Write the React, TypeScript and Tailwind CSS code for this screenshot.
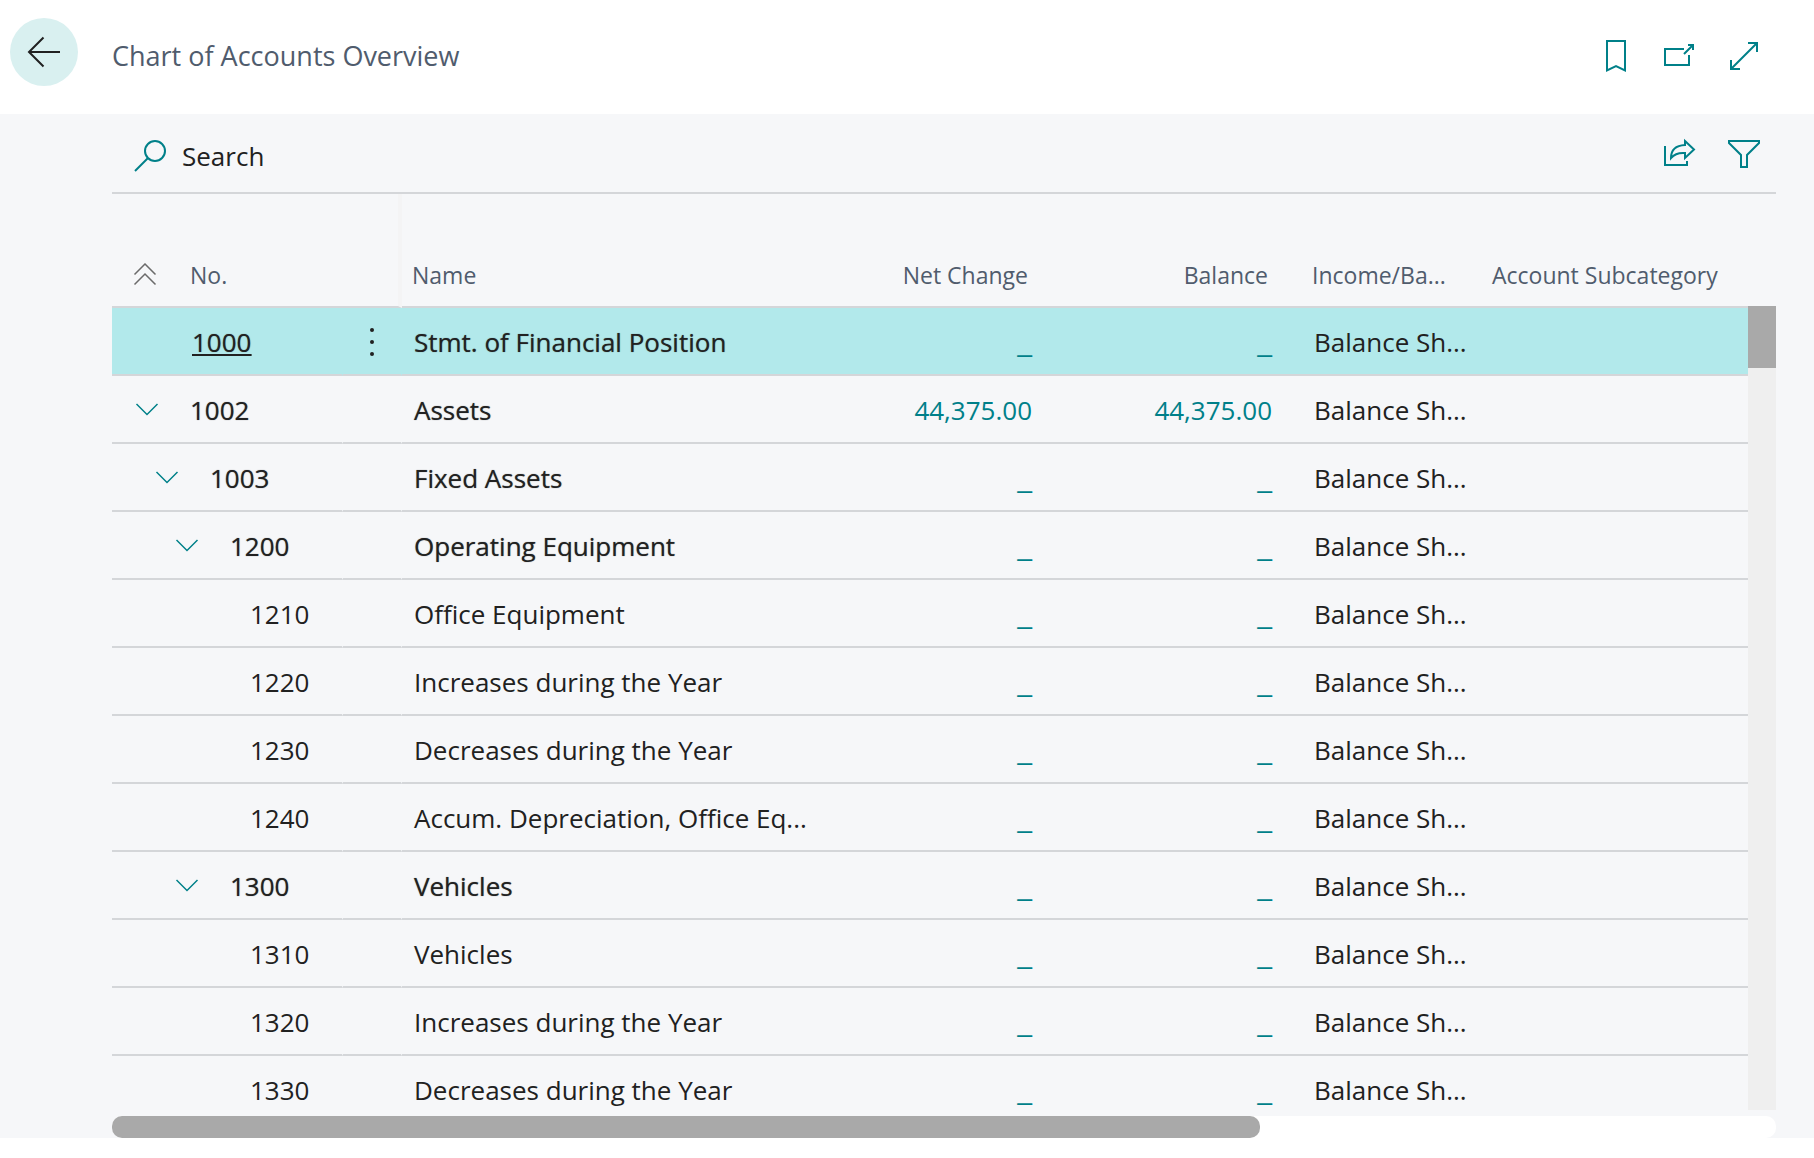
import React, { useState } from 'react';

interface Account {
  no: string;
  name: string;
  level: number;
  heading?: boolean;
  expandable?: boolean;
  netChange?: string;
  balance?: string;
}

const accounts: Account[] = [
  { no: '1000', name: 'Stmt. of Financial Position', level: 0, heading: true },
  { no: '1002', name: 'Assets', level: 0, heading: true, expandable: true, netChange: '44,375.00', balance: '44,375.00' },
  { no: '1003', name: 'Fixed Assets', level: 1, heading: true, expandable: true },
  { no: '1200', name: 'Operating Equipment', level: 2, heading: true, expandable: true },
  { no: '1210', name: 'Office Equipment', level: 3 },
  { no: '1220', name: 'Increases during the Year', level: 3 },
  { no: '1230', name: 'Decreases during the Year', level: 3 },
  { no: '1240', name: 'Accum. Depreciation, Office Eq...', level: 3 },
  { no: '1300', name: 'Vehicles', level: 2, heading: true, expandable: true },
  { no: '1310', name: 'Vehicles', level: 3 },
  { no: '1320', name: 'Increases during the Year', level: 3 },
  { no: '1330', name: 'Decreases during the Year', level: 3 }
];

const indent = ['pl-0', 'pl-5', 'pl-10', 'pl-15'];

interface IconProps {
  size?: string;
  children: React.ReactNode;
}

const Icon: React.FC<IconProps> = ({ size = '36', children }) => (
  <svg width={size} height={size} viewBox={`0 0 ${size} ${size}`} fill="none" stroke="currentColor" strokeWidth="2" className="block shrink-0" aria-hidden="true">
    {children}
  </svg>
);

const PageHeader: React.FC = () => (
  <header className="flex h-[114px] items-start bg-white pl-[10px] pr-[52px]">
    <button aria-label="Back" className="mt-[18px] flex size-[68px] shrink-0 items-center justify-center rounded-full bg-[#d9f0f0] text-[#212121]">
      <Icon>
        <path d="M34 18H3M17.500 3.500L3 18L17.500 32.500" />
      </Icon>
    </button>
    <h1 className="ml-[34px] mt-9 flex-1 text-[27px] leading-10 text-[#505c6d]">Chart of Accounts Overview</h1>
    <div className="mt-[38px] flex gap-7 text-[#008089]">
      <button aria-label="Bookmark">
        <Icon>
          <path d="M9 3H27V32.500L18 28L9 32.500Z" />
        </Icon>
      </button>
      <button aria-label="Open in new window">
        <Icon>
          <path d="M22 11H3V27H27V17M22 16L31 7M26 7H31V12" />
        </Icon>
      </button>
      <button aria-label="Expand">
        <Icon>
          <path d="M5 31L31 5M22 5H31V14M5 22V31H14" />
        </Icon>
      </button>
    </div>
  </header>
);

const Toolbar: React.FC = () => (
  <div className="flex h-20 items-start justify-between border-b-2 border-[#d4d6d9] pr-[14px]">
    <button className="mt-[22px] flex items-center gap-[14px] pl-5 text-[26px] leading-10 text-[#212121]">
      <span className="text-[#008089]">
        <Icon>
          <path d="M16 20L3 33" />
          <circle cx="23" cy="13" r="10" />
        </Icon>
      </span>
      Search
    </button>
    <div className="mt-[22px] flex gap-7 text-[#008089]">
      <button aria-label="Share">
        <Icon>
          <path d="M3 10V29H25V25M23 5L32 13.500L23 22V17C17 16.500 12 18.500 9 22C9 14 14 9.500 23 9Z" />
        </Icon>
      </button>
      <button aria-label="Filter">
        <Icon>
          <path d="M3 5H33V7L21 19V31H15V19L3 7Z" />
        </Icon>
      </button>
    </div>
  </div>
);

interface AmountProps {
  label: string;
  value?: string;
}

const Amount: React.FC<AmountProps> = ({ label, value }) => (
  <a href="#entries" aria-label={label} className={`pr-3 text-[#008089] ${value ? '' : "font-['Liberation_Sans',sans-serif]"}`}>
    {value ?? '_'}
  </a>
);

interface AccountRowProps {
  account: Account;
  selected: boolean;
  onSelect: () => void;
}

const AccountRow: React.FC<AccountRowProps> = ({ account, selected, onSelect }) => {
  const weight = account.heading ? '[text-shadow:0_0_1px_#21212199]' : '';
  const line = 'border-b-2 border-b-[#d4d6d9] p-0 pt-0.5';

  return (
    <tr onClick={onSelect} className={`h-[68px] ${selected ? 'bg-[#b2e9eb]' : ''}`}>
      <td className={`${line} border-r border-r-transparent`}>
        <div className={`flex items-center ${indent[account.level]}`}>
          <span className={`flex shrink-0 pl-[23px] ${selected ? 'w-20' : 'w-[78px]'}`}>
            {account.expandable && (
              <button aria-label={`Collapse ${account.no}`} className="text-[#008089]">
                <Icon size="24">
                  <path d="M1.500 6L12 16.500L22.500 6" strokeWidth="1.500" />
                </Icon>
              </button>
            )}
          </span>
          <a href={`#${account.no}`} className={`${weight} ${selected ? 'underline decoration-2 underline-offset-2' : ''}`}>{account.no}</a>
        </div>
      </td>
      <td className={`${line} border-r border-r-transparent`}>
        {selected && (
          <button aria-label="More options" className="ml-[11px] block">
            <Icon>
              <g fill="currentColor" stroke="none">
                <circle cx="18" cy="6" r="2" />
                <circle cx="18" cy="18" r="2" />
                <circle cx="18" cy="30" r="2" />
              </g>
            </Icon>
          </button>
        )}
      </td>
      <td className={`${line} ${weight}`}>
        <div className="truncate px-3">{account.name}</div>
      </td>
      <td className={`${line} text-right`}>
        <Amount label={`Net change ${account.no}`} value={account.netChange} />
      </td>
      <td className={`${line} text-right`}>
        <Amount label={`Balance ${account.no}`} value={account.balance} />
      </td>
      <td className={line}>
        <div className="truncate pl-[30px]">Balance Sh...</div>
      </td>
      <td className={line}></td>
    </tr>
  );
};

const App: React.FC = () => {
  const [selectedNo, setSelectedNo] = useState('1000');

  return (
    <div className="min-h-screen bg-white font-['Open_Sans',sans-serif]">
      <PageHeader />
      <main className="bg-[#f6f7f9] pl-28 pr-[38px]">
        <Toolbar />
        <div className="flex h-[922px] overflow-hidden">
          <div className="min-w-0 flex-1">
            <table className="w-full table-fixed border-separate border-spacing-0 text-[26px] leading-10 text-[#212121]">
              <colgroup>
                <col className="w-[231px]" />
                <col className="w-[59px]" />
                <col />
                <col className="w-[212px]" />
                <col className="w-60" />
                <col className="w-[198px]" />
                <col className="w-[266px]" />
              </colgroup>
              <thead>
                <tr className="h-[114px] align-bottom text-left text-[23px] leading-8 text-[#505c6d]">
                  <th className="border-b-2 border-[#d4d6d9] p-0 pb-[15px] font-normal">
                    <div className="flex items-center">
                      <span className="flex w-[78px] pl-[21px] text-[#6b6b6b]">
                        <button aria-label="Collapse all">
                          <Icon size="24">
                            <path d="M1.500 11.500L12 1L22.500 11.500M1.500 21.500L12 11L22.500 21.500" strokeWidth="1.500" />
                          </Icon>
                        </button>
                      </span>
                      No.
                    </div>
                  </th>
                  <th className="border-r-4 border-b-2 border-r-[#f4f4f5] border-b-[#d4d6d9] p-0"></th>
                  <th className="border-b-2 border-[#d4d6d9] p-0 pb-[15px] pl-[10px] font-normal">Name</th>
                  <th className="border-b-2 border-[#d4d6d9] p-0 pr-4 pb-[15px] text-right font-normal">Net Change</th>
                  <th className="border-b-2 border-[#d4d6d9] p-0 pr-4 pb-[15px] text-right font-normal">Balance</th>
                  <th className="border-b-2 border-[#d4d6d9] p-0 pb-[15px] font-normal">
                    <div className="truncate pl-7">Income/Ba...</div>
                  </th>
                  <th className="border-b-2 border-[#d4d6d9] p-0 pb-[15px] pl-[10px] font-normal whitespace-nowrap">Account Subcategory</th>
                </tr>
              </thead>
              <tbody>
                {accounts.map((account) => (
                  <AccountRow
                    key={account.no}
                    account={account}
                    selected={account.no === selectedNo}
                    onSelect={() => setSelectedNo(account.no)}
                  />
                ))}
              </tbody>
            </table>
          </div>
          {/* Vertical scrollbar */}
          <div className="mt-28 h-[804px] w-7 shrink-0 bg-[#efefef]">
            <div className="h-[62px] bg-[#a9a9a9]"></div>
          </div>
        </div>
        {/* Horizontal scrollbar */}
        <div className="h-[22px] rounded-[10px] bg-white">
          <div className="h-full w-[69%] rounded-[10px] bg-[#a9a9a9]"></div>
        </div>
      </main>
    </div>
  );
};

export default App;
